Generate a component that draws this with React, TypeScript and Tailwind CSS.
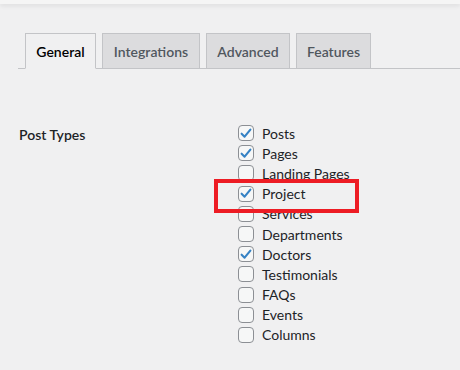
import React from 'react';

const TABS = [
  { label: 'General', w: 'w-[71px]', active: true },
  { label: 'Integrations', w: 'w-[98px]', active: false },
  { label: 'Advanced', w: 'w-[84px]', active: false },
  { label: 'Features', w: 'w-[75px]', active: false },
];

const POST_TYPES = [
  { label: 'Posts', checked: true },
  { label: 'Pages', checked: true },
  { label: 'Landing Pages', checked: false },
  { label: 'Project', checked: true },
  { label: 'Services', checked: false },
  { label: 'Departments', checked: false },
  { label: 'Doctors', checked: true },
  { label: 'Testimonials', checked: false },
  { label: 'FAQs', checked: false },
  { label: 'Events', checked: false },
  { label: 'Columns', checked: false },
];

const Checkbox = ({ checked }: { checked: boolean }) => (
  <span className="w-4 h-4 shrink-0 rounded-[4px] border border-[#8c8f94] bg-[#f6f7f7] flex items-center justify-center">
    {checked && (
      <svg viewBox="0 0 16 16" className="w-[15px] h-[15px]">
        <path d="M3 8.2 L6.4 11.6 L13 3.6" fill="none" stroke="#3582c4" strokeWidth="2.4" strokeLinecap="round" strokeLinejoin="round" />
      </svg>
    )}
  </span>
);

export default function App() {
  return (
    <div className="relative w-[460px] h-[370px] bg-[#f0f0f1] overflow-hidden text-[#1d2327] font-['Lato','Noto_Sans',sans-serif] text-[14px]">
      {/* top shadow strip */}
      <div className="h-[4px] bg-[#f5f5f5] shadow-[0_2px_4px_rgba(0,0,0,0.08)]" />

      {/* Tabs */}
      <div className="mt-[29px] ml-[18px] flex items-end gap-[6px] pl-[7px] border-b border-[#c3c4c7] h-[36px]">
        {TABS.map((tab) => (
          <div
            key={tab.label}
            className={`${tab.w} h-[36px] -mb-px flex items-center justify-center border border-[#c3c4c7] text-[14px] font-semibold ${
              tab.active ? 'bg-[#f0f0f1] border-b-[#f0f0f1] text-black' : 'bg-[#dcdcde] text-[#50575e]'
            }`}
          >
            {tab.label}
          </div>
        ))}
      </div>

      {/* Form */}
      <div className="flex mt-[54px]">
        <div className="w-[238px] pl-[19px] pt-[1px] font-semibold">Post Types</div>
        <div className="flex flex-col">
          {POST_TYPES.map((pt) => (
            <label key={pt.label} className="flex items-center gap-2 h-[20.2px]">
              <Checkbox checked={pt.checked} />
              <span>{pt.label}</span>
            </label>
          ))}
        </div>
      </div>

      {/* red highlight */}
      <div className="absolute left-[214px] top-[179px] w-[145px] h-[34px] border-4 border-[#ed1c24]" />
    </div>
  );
}
